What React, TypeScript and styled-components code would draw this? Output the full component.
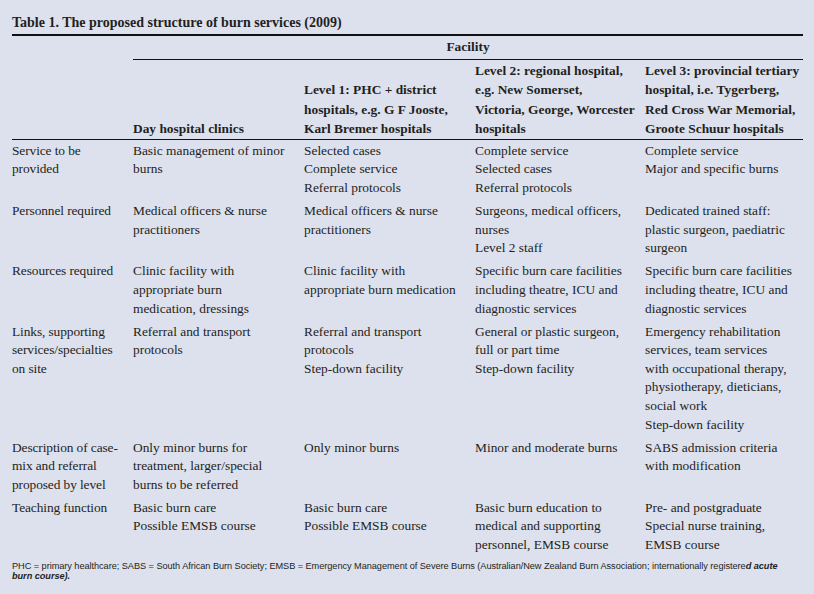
import React from 'react';
import styled, { createGlobalStyle } from 'styled-components';

const GlobalStyle = createGlobalStyle`
  html, body {
    margin: 0;
    padding: 0;
    background: #dde1ee;
  }
  body {
    width: 814px;
    height: 594px;
    overflow: hidden;
  }
`;

const Page = styled.div`
  box-sizing: border-box;
  width: 814px;
  height: 594px;
  padding: 13px 11px 0 12px;
  background: #dde1ee;
  color: #231f20;
  font-family: 'Liberation Serif', 'DejaVu Serif', serif;
`;

const Title = styled.h1`
  margin: 0;
  font-size: 14px;
  line-height: 19px;
  font-weight: 700;
  padding-bottom: 2px;
  border-bottom: 2px solid #111;
`;

const Table = styled.table`
  width: 791px;
  border-collapse: collapse;
  table-layout: fixed;
  font-size: 13.4px;
`;

const Col = styled.col<{ $w: number }>`
  width: ${({ $w }) => $w}px;
`;

const GroupHead = styled.th`
  padding: 2px 0 3px;
  line-height: 18px;
  font-weight: 700;
  text-align: center;
  border-bottom: 1px solid #111;
`;

const BlankHead = styled.th`
  padding: 0;
`;

const HeadRow = styled.tr`
  border-bottom: 1px solid #111;
`;

const HeadCell = styled.th`
  padding: 1px 0 1px;
  line-height: 19.3px;
  font-weight: 700;
  text-align: left;
  vertical-align: bottom;
`;

const Cell = styled.td<{ $label?: boolean }>`
  padding: 1.6px 0 2.9px;
  line-height: 18.6px;
  vertical-align: top;
  text-align: left;
  font-weight: 400;
  ${({ $label }) => ($label ? 'letter-spacing: -0.1px;' : '')}
`;

const Line = styled.span`
  display: block;
  white-space: nowrap;
`;

const Note = styled.p`
  margin: 3px 0 0;
  font-family: 'Liberation Sans', 'DejaVu Sans', sans-serif;
  font-size: 9.2px;
  line-height: 10px;
  letter-spacing: -0.05px;
  white-space: nowrap;

  em {
    font-weight: 700;
    font-style: italic;
  }
`;

const widths = [121, 171, 171, 170, 158];

const headers: string[][] = [
  ['Day hospital clinics'],
  ['Level 1: PHC + district', 'hospitals, e.g. G F Jooste,', 'Karl Bremer hospitals'],
  ['Level 2: regional hospital,', 'e.g. New Somerset,', 'Victoria, George, Worcester', 'hospitals'],
  ['Level 3: provincial tertiary', 'hospital, i.e. Tygerberg,', 'Red Cross War Memorial,', 'Groote Schuur hospitals'],
];

const rows: string[][][] = [
  [
    ['Service to be', 'provided'],
    ['Basic management of minor', 'burns'],
    ['Selected cases', 'Complete service', 'Referral protocols'],
    ['Complete service', 'Selected cases', 'Referral protocols'],
    ['Complete service', 'Major and specific burns'],
  ],
  [
    ['Personnel required'],
    ['Medical officers & nurse', 'practitioners'],
    ['Medical officers & nurse', 'practitioners'],
    ['Surgeons, medical officers,', 'nurses', 'Level 2 staff'],
    ['Dedicated trained staff:', 'plastic surgeon, paediatric', 'surgeon'],
  ],
  [
    ['Resources required'],
    ['Clinic facility with', 'appropriate burn', 'medication, dressings'],
    ['Clinic facility with', 'appropriate burn medication'],
    ['Specific burn care facilities', 'including theatre, ICU and', 'diagnostic services'],
    ['Specific burn care facilities', 'including theatre, ICU and', 'diagnostic services'],
  ],
  [
    ['Links, supporting', 'services/specialties', 'on site'],
    ['Referral and transport', 'protocols'],
    ['Referral and transport', 'protocols', 'Step-down facility'],
    ['General or plastic surgeon,', 'full or part time', 'Step-down facility'],
    [
      'Emergency rehabilitation',
      'services, team services',
      'with occupational therapy,',
      'physiotherapy, dieticians,',
      'social work',
      'Step-down facility',
    ],
  ],
  [
    ['Description of case-', 'mix and referral', 'proposed by level'],
    ['Only minor burns for', 'treatment, larger/special', 'burns to be referred'],
    ['Only minor burns'],
    ['Minor and moderate burns'],
    ['SABS admission criteria', 'with modification'],
  ],
  [
    ['Teaching function'],
    ['Basic burn care', 'Possible EMSB course'],
    ['Basic burn care', 'Possible EMSB course'],
    ['Basic burn education to', 'medical and supporting', 'personnel, EMSB course'],
    ['Pre- and postgraduate', 'Special nurse training,', 'EMSB course'],
  ],
];

function Lines({ lines }: { lines: string[] }) {
  return (
    <>
      {lines.map((l, i) => (
        <Line key={i}>{l}</Line>
      ))}
    </>
  );
}

export default function App() {
  return (
    <>
      <GlobalStyle />
      <Page>
        <Title>Table 1. The proposed structure of burn services (2009)</Title>
        <Table>
          <colgroup>
            {widths.map((w, i) => (
              <Col key={i} $w={w} />
            ))}
          </colgroup>
          <thead>
            <tr>
              <BlankHead />
              <GroupHead colSpan={4}>Facility</GroupHead>
            </tr>
            <HeadRow>
              <HeadCell />
              {headers.map((h, i) => (
                <HeadCell key={i}>
                  <Lines lines={h} />
                </HeadCell>
              ))}
            </HeadRow>
          </thead>
          <tbody>
            {rows.map((row, r) => (
              <tr key={r}>
                {row.map((cell, c) => (
                  <Cell key={c} $label={c === 0}>
                    <Lines lines={cell} />
                  </Cell>
                ))}
              </tr>
            ))}
          </tbody>
        </Table>
        <Note>
          PHC = primary healthcare; SABS = South African Burn Society; EMSB = Emergency Management of Severe
          Burns (Australian/New Zealand Burn Association; internationally registere<em>d acute</em>
          <br />
          <em>burn course).</em>
        </Note>
      </Page>
    </>
  );
}
